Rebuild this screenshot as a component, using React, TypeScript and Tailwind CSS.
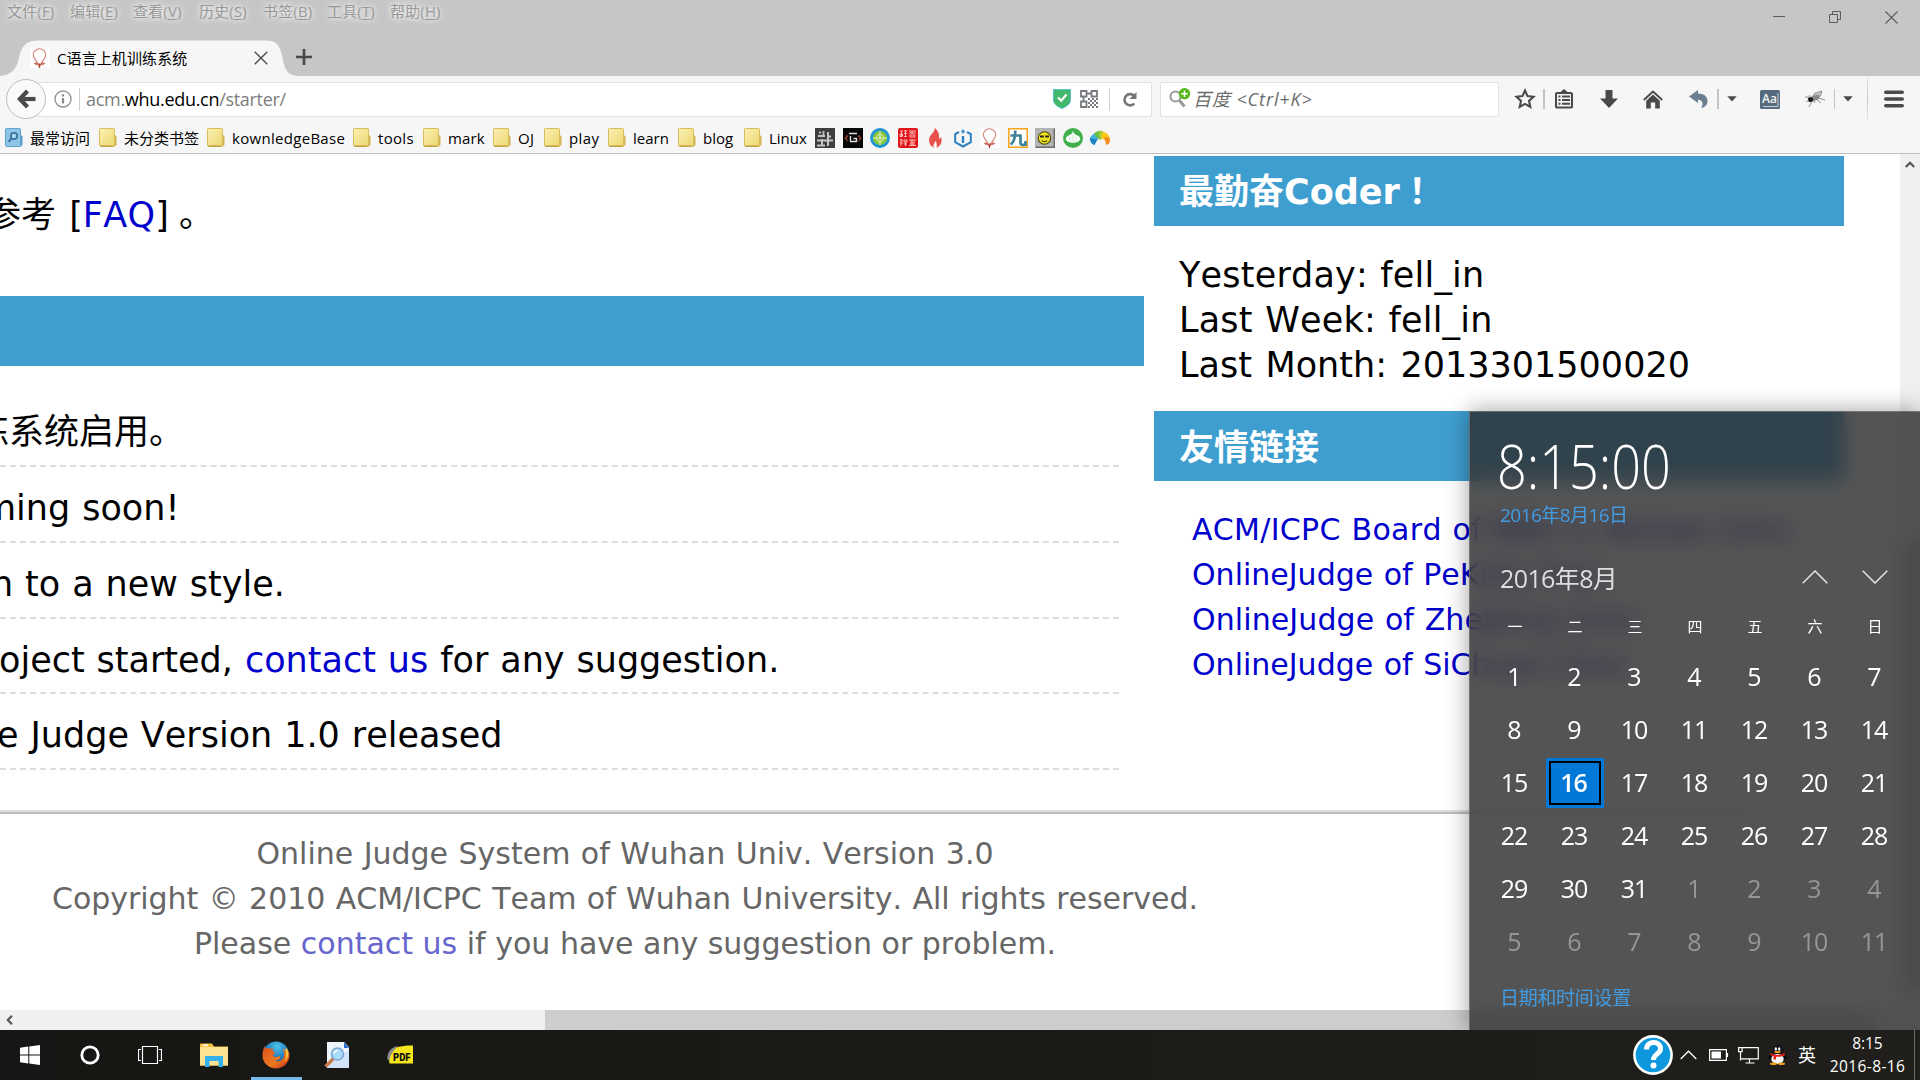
import React from "react";

const UI = "font-['Open_Sans','Noto_Sans_CJK_SC',sans-serif]";
const WEB = "font-['DejaVu_Sans','Noto_Sans_CJK_SC',sans-serif] [font-kerning:none]";

/* ---------- small drawings ---------- */

const Balloon = () => (
  <svg width="20" height="20" viewBox="0 0 20 20" className="shrink-0">
    <rect width="20" height="20" fill="#fff" />
    <path d="M7.500 15C6.500 12.500 3.300 10.500 3.300 6.800a6.200 6 0 0 1 12.400 0C15.700 10.500 12.500 12.500 11.500 15" fill="none" stroke="#d27f73" strokeWidth="1.100" />
    <path d="M3.500 15l3.500-.5 2.500 1.500 2.500-1.500 3.500.5-2.500 2.200-1-.7-2.500 2.500-2.500-2.500-1 .7z" fill="#c96a5e" />
    <path d="M9.500 15.500V20" stroke="#b24438" strokeWidth="1.200" />
  </svg>
);

const Folder = () => (
  <svg width="18" height="20" viewBox="0 0 18 20" className="shrink-0">
    <defs>
      <linearGradient id="fold" x1="0" y1="0" x2="1" y2="1">
        <stop offset="0" stopColor="#fbf0b4" />
        <stop offset="1" stopColor="#ecd872" />
      </linearGradient>
    </defs>
    <path d="M12 7h4l1.500 1.500V17L15 19H3z" fill="#d3b454" />
    <path d="M13 8h3v8l-3 2z" fill="#ecdb8c" />
    <rect x=".5" y=".5" width="15" height="17.500" rx=".8" fill="url(#fold)" stroke="#d9bd5c" />
    <path d="M1 17.500h13l-1 1.500H1.500z" fill="#c2a245" />
  </svg>
);

const MostVisited = () => (
  <svg width="18" height="20" viewBox="0 0 18 20" className="shrink-0">
    <path d="M12 7h4l1.500 1.500V17L15 19H3z" fill="#5a9dc8" />
    <rect x=".5" y=".5" width="15" height="18" rx=".8" fill="#8fc4e6" stroke="#5fa3d0" />
    <circle cx="9" cy="8" r="3.200" fill="#a9d5ef" stroke="#3a759f" strokeWidth="1.800" />
    <path d="M6.700 10.300L3.500 13.700" stroke="#3a759f" strokeWidth="2" />
  </svg>
);

const favicons: React.ReactNode[] = [
  <svg width="20" height="20" viewBox="0 0 20 20">
    <rect width="20" height="20" fill="#3e3e40" />
    <g stroke="#c4c4c4" fill="none">
      <path d="M8.500 3v5M3 8h7" strokeWidth="1.800" />
      <path d="M2 12.500h16M2 17.500h8" strokeWidth="2" />
      <path d="M7 11v6M13 4v14M13 8.500h3" strokeWidth="2" />
      <path d="M4 4.500h2" strokeWidth="2" />
    </g>
  </svg>,
  <svg width="20" height="20" viewBox="0 0 20 20">
    <rect width="20" height="20" fill="#080808" />
    <path d="M6 5.500h8M7.500 8v5.500h6V10.500h-3" fill="none" stroke="#dcdcdc" strokeWidth="1.400" />
    <path d="M4.500 7.500l-2 2.500 2 3M15.500 7.500l2 2.500-2 3" fill="none" stroke="#c9503a" strokeWidth="1.500" strokeDasharray="2 1" />
  </svg>,
  <svg width="20" height="20" viewBox="0 0 20 20">
    <circle cx="10" cy="10" r="8.500" fill="#8cc63a" stroke="#1f95d6" strokeWidth="2.800" />
    <circle cx="10" cy="10" r="3.500" fill="none" stroke="#d9efb0" strokeWidth="1" />
    <path d="M10 3v14M3 10h14" stroke="#e3f4c4" strokeWidth="1.100" />
  </svg>,
  <svg width="20" height="20" viewBox="0 0 20 20">
    <rect width="20" height="20" rx="2" fill="#e3161b" />
    <g stroke="#ffb9b5" strokeWidth="1" fill="none">
      <path d="M2 3h3M3.500 3v5M2 6h2.500v2.500H2zM6 3h3M7.500 2v6M6 5.500h3M6 8.500h3" />
      <path d="M11 3h7M14 3v3M11 5h7M12 7h5v2h-5z" />
      <path d="M2 12h3M3 11v7M2 15h3M6 12h3v2H6zM6 16h3M7.500 14v4" />
      <path d="M11 12h7M12 14h5M14 11v7M11 17.500h7M12 16h5" />
    </g>
  </svg>,
  <svg width="20" height="20" viewBox="0 0 20 20">
    <path d="M9.500 0c1 3.500-4 6-5.200 10.200C3.300 14.500 5.500 18 9 19.800c-1.500-3 .8-4.500 1.600-7 1 1.600 1.600 4.500 1 7 4-1.800 6-5.800 4.600-10.800-.8 1-1.200 1.800-2.200 2C14.500 6.500 13 2 9.500 0z" fill="#e8514a" />
  </svg>,
  <svg width="20" height="20" viewBox="0 0 20 20">
    <path d="M6 4L2.200 6v8.200L10 18.500l7.800-4.300V6L14 4" fill="none" stroke="#2c7fc0" strokeWidth="2" />
    <path d="M10 8v7" stroke="#2c7fc0" strokeWidth="2.400" />
    <path d="M10 1l2.200 2.500L10 6 7.800 3.500z" fill="#4a97d0" />
  </svg>,
  <Balloon />,
  <svg width="20" height="20" viewBox="0 0 20 20">
    <rect x=".75" y=".75" width="18.500" height="18.500" fill="#fff" stroke="#f8a51b" strokeWidth="1.500" />
    <path d="M2.500 7.500h10.500M7.200 2.500c.2 7-.8 11-4.500 14M12.500 6.500V15c0 2 1.500 2.200 5 1.700V13" fill="none" stroke="#3f8298" strokeWidth="2.700" />
  </svg>,
  <svg width="20" height="20" viewBox="0 0 20 20">
    <rect width="20" height="20" fill="#b4b4b4" />
    <path d="M0 20h20V0l-1.500 1.500v17H1.500z" fill="#6d6d6d" />
    <circle cx="9.500" cy="10" r="6.300" fill="#f1e31b" stroke="#4c4712" strokeWidth="1.100" />
    <path d="M5 8.500h9" stroke="#222" strokeWidth="1.800" strokeDasharray="3.800 1.400" />
    <path d="M6.800 12.500c1.500 1.500 4 1.500 5.400 0" fill="none" stroke="#222" strokeWidth="1" />
  </svg>,
  <svg width="20" height="20" viewBox="0 0 20 20">
    <circle cx="10" cy="10" r="10" fill="#41b04b" />
    <path d="M10 2.500c-.3 3-2 4-4.500 5-5 2.500-3 6.800 4.500 7.500 7.500-.7 9.500-5 4.500-7.500C12 6.500 10.300 5.500 10 2.500z" fill="#fff" />
    <path d="M10 6v8.500M7.500 8.500c-1.200 2-1.200 4 0 5.500M12.500 8.500c1.200 2 1.200 4 0 5.500" fill="none" stroke="#a9dcac" strokeWidth=".7" />
  </svg>,
  <svg width="20" height="20" viewBox="0 0 20 20">
    <path d="M0 10L5 7l3 3.500L4.500 17C2 16.500 0 14 0 10z" fill="#1c7fc4" />
    <path d="M0 10C1 8 3 6 5 5l4 4-3.500 2.500z" fill="#3fb3dc" />
    <path d="M4 5.500C7 2.500 11 2 13.500 4L10 12 6 8.500z" fill="#6fbf44" />
    <path d="M9 3c2-.6 3.500 0 5 1.500L12 10.500l-2 1.500z" fill="#a6ce39" />
    <path d="M12.500 4c3.500 0 6 2 7 5.500L15 12.500l-4-3z" fill="#fbc914" />
    <path d="M14 9l5.500.5c1 3 .2 5.500-1.500 7h-2.500c.3-2.500 0-4.500-1.500-7.500z" fill="#f58a1f" />
  </svg>,
];

/* ---------- browser chrome ---------- */

const menus = [
  { t: "文件", k: "F", w: "w-[63px]" },
  { t: "编辑", k: "E", w: "w-[63px]" },
  { t: "查看", k: "V", w: "w-[66px]" },
  { t: "历史", k: "S", w: "w-[64px]" },
  { t: "书签", k: "B", w: "w-[64px]" },
  { t: "工具", k: "T", w: "w-[63px]" },
  { t: "帮助", k: "H", w: "w-[64px]" },
];

const TitleBar = () => (
  <div className="flex h-[76px] justify-between bg-[#c6c6c6]">
    <div>
      <div className="flex h-[40px] pl-[7px] text-[15px] leading-[22px] tracking-[0.150px] text-[#979797] [text-shadow:0_0_5px_#fff,0_0_8px_#ececec]">
        {menus.map((m) => (
          <span key={m.k} className={`${m.w} whitespace-nowrap`}>
            {m.t}(<span className="underline underline-offset-2">{m.k}</span>)
          </span>
        ))}
      </div>
      <div className="flex h-[36px]">
        <div className="relative flex h-[36px] w-[296px] items-center">
          <svg width="298" height="36" viewBox="0 0 298 36" className="absolute left-0 top-0">
            <path d="M0 36C12 35 17 28 19 18C21.500 5 27 .5 38 .5H266C277 .5 280.500 6 282.500 18C284.500 30 288 35.500 298 36Z" fill="#f6f6f6" />
          </svg>
          <div className="relative flex w-full items-center pl-[30px]">
            <Balloon />
            <span className="-mt-px ml-[7px] w-[197px] whitespace-nowrap text-[15px] leading-5 tracking-[0.100px] text-black">C语言上机训练系统</span>
            <svg width="14" height="14" viewBox="0 0 14 14">
              <path d="M.7.700l12.600 12.600M13.300.700L.7 13.300" stroke="#4d4d4d" strokeWidth="1.400" />
            </svg>
          </div>
        </div>
        <svg width="16" height="16" viewBox="0 0 16 16" className="mt-[9px]">
          <path d="M8 0v16M0 8h16" stroke="#4a4a4a" strokeWidth="2.700" />
        </svg>
      </div>
    </div>
    <div className="flex gap-[43px] pr-[22px] pt-[11px] text-[#5c5c5c]">
      <svg width="13" height="13" viewBox="0 0 13 13"><path d="M0 5.500h12" stroke="currentColor" /></svg>
      <svg width="13" height="13" viewBox="0 0 13 13"><path d="M.5 3.500h8v8h-8zM3.500 3V.5h8v8H9" fill="none" stroke="currentColor" /></svg>
      <svg width="13" height="13" viewBox="0 0 13 13"><path d="M.5.500l12 12M12.500.500l-12 12" stroke="currentColor" strokeWidth="1.100" /></svg>
    </div>
  </div>
);

const Caret = () => (
  <svg width="10" height="6" viewBox="0 0 10 6"><path d="M.3.300h9.400L5 5.500z" fill="#4a4a4a" /></svg>
);

const NavBar = () => (
  <div className="flex h-[46px] items-center pl-[6px]">
    <div className="relative z-10 -mr-[8px] flex size-[40px] shrink-0 items-center justify-center rounded-full border border-[#bdbdbd] bg-[#fafafa]">
      <svg width="19" height="20" viewBox="0 0 19 20">
        <path d="M10.500 2L2.800 10l7.700 8" fill="none" stroke="#4a4a4a" strokeWidth="4.200" />
        <path d="M3 10h15.500" stroke="#4a4a4a" strokeWidth="4.200" />
      </svg>
    </div>
    <div className="flex h-[35px] w-[1114px] shrink-0 items-center rounded-r-[2px] border border-[#e1e1e1] bg-white pl-[15px]">
      <svg width="18" height="18" viewBox="0 0 18 18">
        <circle cx="9" cy="9" r="8" fill="none" stroke="#959595" strokeWidth="1.400" />
        <path d="M9 8v5.500M9 4.200v2.200" stroke="#8a8a8a" strokeWidth="2.200" />
      </svg>
      <div className="ml-[7px] h-[23px] w-px bg-[#cfcfcf]" />
      <div className="ml-[6px] w-[967px] whitespace-nowrap text-[18px] leading-6 tracking-[-0.300px] text-[#7d7d7d]">
        acm.<span className="text-black">whu.edu.cn</span>/starter/
      </div>
      <svg width="18" height="20" viewBox="0 0 18 20">
        <path d="M.5.500h17V11c0 4-4 6.500-8.500 8.500C4.500 17.500.5 15 .5 11z" fill="#43b76a" stroke="#53c3cf" />
        <path d="M5 8.500l3.200 3.200L13.500 5.500" fill="none" stroke="#fff" strokeWidth="2.200" />
      </svg>
      <svg width="18" height="18" viewBox="0 0 18 18" className="ml-[9px]">
        <g fill="none" stroke="#75787d" strokeWidth="1.800">
          <path d="M1 1h5.500v5.500H1zM11.500 1H17v5.500h-5.500zM1 11.500h5.500V17H1z" />
          <path d="M6.500 3.500h5M3.500 6.500v5" />
          <path d="M8 9h10M8 13h10M8 17h10" strokeDasharray="2 2" />
          <path d="M10 11h8M10 15h8" strokeDasharray="2 2" />
        </g>
      </svg>
      <div className="ml-[11px] h-[23px] w-px bg-[#cfcfcf]" />
      <svg width="15" height="15" viewBox="0 0 15 15" className="ml-[12px]">
        <path d="M12 3.700A5.600 5.600 0 1 0 12.300 11.500" fill="none" stroke="#757575" strokeWidth="2.600" />
        <path d="M14.500 0v7H7.500z" fill="#757575" />
      </svg>
    </div>
    <div className="ml-[8px] flex h-[35px] w-[339px] shrink-0 items-center rounded-[2px] border border-[#e1e1e1] bg-white pl-[8px]">
      <svg width="22" height="20" viewBox="0 0 22 20" className="-mt-[2px]">
        <circle cx="6.500" cy="8.500" r="5" fill="none" stroke="#999" strokeWidth="2" />
        <path d="M10.500 12.500l5 6" stroke="#999" strokeWidth="3" />
        <circle cx="15.500" cy="5.700" r="5.700" fill="#56b81c" />
        <path d="M15.500 2.500v6.400M12.300 5.700h6.400" stroke="#fff" strokeWidth="1.600" />
      </svg>
      <span className="ml-[2px] whitespace-nowrap text-[18px] italic leading-6 tracking-[0.900px] text-[#6b6b6b]">百度 &lt;Ctrl+K&gt;</span>
    </div>
    <div className="flex h-full flex-1 items-center text-[#4a4a4a]">
      <svg width="22" height="22" viewBox="0 0 22 22" className="ml-[15px]">
        <path d="M11 2.500l2.500 5.600 6 .7-4.500 4.100 1.300 6L11 15.900l-5.300 3 1.300-6-4.500-4.100 6-.7z" fill="none" stroke="currentColor" strokeWidth="2.100" />
      </svg>
      <div className="ml-[7px] h-[20px] w-[2px] bg-[#c4c4c4]" />
      <svg width="18" height="20" viewBox="0 0 18 20" className="ml-[10px]">
        <path d="M9 0l4 3.500H5z" fill="currentColor" />
        <rect x="1" y="4" width="16" height="14.500" rx="1.200" fill="none" stroke="currentColor" strokeWidth="2.100" />
        <path d="M3.500 7.500h2M3.500 11h2M3.500 14.800h2M7 7.500h8M7 11h8M7 14.800h8" stroke="currentColor" strokeWidth="1.900" />
      </svg>
      <svg width="18" height="18" viewBox="0 0 18 18" className="ml-[27px]">
        <path d="M5.500 0h7v8.500H18l-9 9.500-9-9.500h5.500z" fill="currentColor" />
      </svg>
      <svg width="20" height="19" viewBox="0 0 20 19" className="ml-[25px]">
        <path d="M.8 10L10 1.500 19.200 10" fill="none" stroke="currentColor" strokeWidth="1.900" />
        <path d="M10 4.500l6.800 6.300V18.500h-4.600V12.500H7.800v6H3.200v-7.700z" fill="currentColor" />
      </svg>
      <svg width="19" height="18" viewBox="0 0 19 18" className="ml-[26px]">
        <path d="M0 6.500L9 0v3.500c6 0 9.500 3 9.500 7.500 0 4-2.500 6.500-6.500 7 2-2 3-8-3-8.300V13z" fill="#6c7f90" />
      </svg>
      <div className="ml-[9px] h-[20px] w-[1.500px] bg-[#c4c4c4]" />
      <span className="ml-[8px]"><Caret /></span>
      <svg width="20" height="19" viewBox="0 0 20 19" className="ml-[23px]">
        <rect width="20" height="19" rx="1.500" fill="#566b7d" />
        <path d="M18 3v13.500H3" fill="none" stroke="#c9d2da" strokeWidth="1" />
        <text x="2" y="13" fontSize="12" fontWeight="600" fill="#f2f5f7" fontFamily="Open Sans, sans-serif">Aa</text>
      </svg>
      <svg width="21" height="18" viewBox="0 0 21 18" className="ml-[25px]">
        <path d="M6 8L10 3l7-2-1.500 5-5 3z" fill="#c2c2c2" stroke="#777" strokeWidth=".7" />
        <ellipse cx="10" cy="8" rx="5" ry="2.600" transform="rotate(-25 10 8)" fill="#8a8a8a" />
        <circle cx="5.500" cy="9.500" r="2.600" fill="#1a1a1a" />
        <path d="M0 7h4M1 12l3-2M4 17l3-6M10 13l-2-3M13 8l7 2M11 9l5 4M4 5l2 3" fill="none" stroke="#777" strokeWidth=".8" />
      </svg>
      <div className="ml-[8px] h-[20px] w-px bg-[#c4c4c4]" />
      <span className="ml-[8px]"><Caret /></span>
      <div className="ml-[14px] h-full w-px bg-gradient-to-b from-[#e6e6e6] via-[#c6c6c6] to-[#ececec]" />
      <svg width="20" height="18" viewBox="0 0 20 18" className="ml-[16px]">
        <path d="M1.800 2.200h16.400M1.800 9h16.400M1.800 15.800h16.400" stroke="currentColor" strokeWidth="3.600" strokeLinecap="round" />
      </svg>
    </div>
  </div>
);

const bookmarks = [
  { t: "最常访问", w: "w-[94px]", tr: "" },
  { t: "未分类书签", w: "w-[108px]", tr: "" },
  { t: "kownledgeBase", w: "w-[146px]", tr: "tracking-[0.300px]" },
  { t: "tools", w: "w-[70px]", tr: "tracking-[0.300px]" },
  { t: "mark", w: "w-[70px]", tr: "tracking-[0.100px]" },
  { t: "OJ", w: "w-[51px]", tr: "tracking-[0.400px]" },
  { t: "play", w: "w-[64px]", tr: "tracking-[0.400px]" },
  { t: "learn", w: "w-[70px]", tr: "" },
  { t: "blog", w: "w-[66px]", tr: "" },
  { t: "Linux", w: "w-[71px]", tr: "" },
];

const BookmarkBar = () => (
  <div className="flex h-[32px] items-center border-b border-[#bfbfbf] pl-[5px]">
    {bookmarks.map((b, i) => (
      <div key={b.t} className={`${b.w} flex shrink-0 items-center`}>
        {i === 0 ? <MostVisited /> : <Folder />}
        <span className={`${b.tr} ml-[7px] whitespace-nowrap text-[15px] leading-5 text-black`}>{b.t}</span>
      </div>
    ))}
    <div className="flex gap-[7.500px]">
      {favicons.map((f, i) => (
        <span key={i}>{f}</span>
      ))}
    </div>
  </div>
);

/* ---------- web page ---------- */

const link = "text-[#0000cc]";
const heading = "h-[70px] bg-[#3f9ed0] pl-[25px] text-[35px] font-bold text-white";

const Sidebar = () => (
  <div className="w-[690px] pt-[2px]">
    <h2 className={`${heading} leading-[72px]`}>
      最勤奋Coder<span className="font-['Noto_Sans_CJK_TC',sans-serif] leading-none">！</span>
    </h2>
    <div className="h-[185px] whitespace-nowrap pl-[25px] pt-[27px] text-[35px] leading-[45px] text-black">
      <p className="tracking-[0.200px] [word-spacing:1px]">Yesterday: fell_in</p>
      <p className="tracking-[0.200px] [word-spacing:1.200px]">Last Week: fell_in</p>
      <p className="[word-spacing:2.400px]">Last Month: 2013301500020</p>
    </div>
    <h2 className={`${heading} leading-[75px]`}>友情链接</h2>
    <div className={`whitespace-nowrap pl-[38px] pt-[26px] text-[30px] leading-[45px] [word-spacing:1px] ${link}`}>
      <p className="tracking-[0.300px]">ACM/ICPC Board of BBS in Wuhan Univ.</p>
      <p>OnlineJudge of PeKing Univ.</p>
      <p className="tracking-[0.100px]">OnlineJudge of ZheJiang Univ.</p>
      <p>OnlineJudge of SiChuan Univ.</p>
    </div>
  </div>
);

const row = "h-[75.750px] border-b-2 border-dashed border-[#dddddd] leading-[82px] whitespace-nowrap";

const Page = () => (
  <div className={`${WEB} flex h-[856px] bg-white`}>
    <div className="w-[1900px] overflow-hidden">
      <div className="flex h-[656px]">
        <div className="w-[1144px] text-[35px] text-black">
          <p className="-ml-[14px] h-[142px] whitespace-nowrap pt-[39px] leading-[45px] [word-spacing:2px]">
            参考 [<span className={`${link} tracking-[0.300px]`}>FAQ</span>]<span className="pl-[10px]">。</span>
          </p>
          <div className="h-[70px] bg-[#3f9ed0]" />
          <ul className="w-[1119px] pt-[25.250px] [word-spacing:0.800px]">
            <li className={row}><span className="-ml-[26px]">练系统启用。</span></li>
            <li className={row}><span className="-ml-[18px]">ming soon!</span></li>
            <li className={row}><span className="-ml-[9px]">n to a new style.</span></li>
            <li className={row}><span className="-ml-[1px]">oject started, <span className={link}>contact us</span> for any suggestion.</span></li>
            <li className={row}><span className="-ml-[3px]">e Judge Version 1.0 released</span></li>
          </ul>
        </div>
        <div className="ml-[10px]"><Sidebar /></div>
      </div>
      <div className="h-[4px] w-[1750px] border-b-2 border-t-2 border-b-[#bbbbbb] border-t-[#dddddd]" />
      <div className="w-[1250px] pt-[17px] text-center text-[30px] leading-[45px] text-[#666666]">
        <p className="[word-spacing:0.900px]">Online Judge System of Wuhan Univ. Version 3.0</p>
        <p className="tracking-[-0.030px] [word-spacing:0.900px]">Copyright © 2010 ACM/ICPC Team of Wuhan University. All rights reserved.</p>
        <p>Please <span className="text-[#6666cc]">contact us</span> if you have any suggestion or problem.</p>
      </div>
    </div>
    <div className="w-[20px] bg-[#f0f0f0] pt-[7px]">
      <svg width="10" height="7" viewBox="0 0 10 7" className="ml-[5px]">
        <path d="M.8 6L5 1.800 9.200 6" fill="none" stroke="#555" strokeWidth="2.200" />
      </svg>
      <div className="mt-[372px] h-[450px] bg-[#cdcdcd]" />
    </div>
  </div>
);

/* ---------- clock flyout ---------- */

const week = ["一", "二", "三", "四", "五", "六", "日"];
const days = [
  ...Array.from({ length: 31 }, (_, i) => ({ d: i + 1, off: false })),
  ...Array.from({ length: 11 }, (_, i) => ({ d: i + 1, off: true })),
];

const ClockFlyout = () => (
  <div className="absolute bottom-[50px] right-0 h-[619px] w-[451px] overflow-hidden border-l border-t border-[#8a8a8a]/60 bg-[#2c2c2c]/[0.81] shadow-[0_0_22px_rgba(0,0,0,0.38)] backdrop-blur-[10px]">
    <div className="ml-[27px] mt-[14px] h-[79px] w-max origin-left scale-x-[0.870] whitespace-nowrap text-[60px] font-light leading-[80px] text-white">8:15:00</div>
    <div className="ml-[30px] mt-[-2px] h-[24px] whitespace-nowrap text-[19px] leading-[24px] tracking-[-0.550px] text-[#429ce3]">2016年8月16日</div>
    <div className="mt-[34px] flex h-[34px] items-center pl-[30px]">
      <span className="w-[302px] whitespace-nowrap text-[25px] leading-[34px] tracking-[-0.600px] text-[#dedede]">2016年8月</span>
      <svg width="26" height="14" viewBox="0 0 26 14" className="-mt-[2px]"><path d="M.7 13.300L13 1l12.300 12.300" fill="none" stroke="#e4e4e4" strokeWidth="1.500" /></svg>
      <svg width="26" height="14" viewBox="0 0 26 14" className="-mt-[2px] ml-[34px]"><path d="M.7.700L13 13 25.300.700" fill="none" stroke="#e4e4e4" strokeWidth="1.500" /></svg>
    </div>
    <div className="ml-[15px] mt-[18px] grid w-[420px] grid-cols-7 text-center text-[15px] leading-[26px] text-white">
      {week.map((w) => (
        <span key={w}>{w}</span>
      ))}
    </div>
    <div className="ml-[14px] mt-[11px] grid w-[420px] auto-rows-[53px] grid-cols-7 items-center text-center text-[25px] leading-none tracking-[-1px]">
      {days.map(({ d, off }, i) =>
        d === 16 ? (
          <span key={i} className="ml-[2px] flex h-[50px] w-[58px] border-[3px] border-[#0078d7] bg-[#0078d7]">
            <span className="flex flex-1 items-center justify-center border-2 border-black pr-[3px] font-semibold text-white">16</span>
          </span>
        ) : (
          <span key={i} className={off ? "text-[#969696]" : "text-white"}>{d}</span>
        )
      )}
    </div>
    <div className="ml-[30px] mt-[17px] text-[19px] leading-[26px] tracking-[-0.300px] text-[#429ce3]">日期和时间设置</div>
  </div>
);

/* ---------- taskbar ---------- */

const Taskbar = () => (
  <div className="relative z-20 flex h-[50px] items-center justify-between bg-gradient-to-r from-[#161614] via-[#1b1a17] to-[#201f1c]">
    <div className="flex h-full items-center pl-[20px]">
      <svg width="20" height="20" viewBox="0 0 20 20">
        <path d="M0 2.800L8.300 1.600V9.500H0zM9.300 1.400L20 0V9.500H9.300zM0 10.500H8.300v7.900L0 17.200zM9.300 10.500H20V20L9.300 18.600z" fill="#fff" />
      </svg>
      <svg width="20" height="20" viewBox="0 0 20 20" className="ml-[40px]">
        <circle cx="10" cy="10" r="8.200" fill="none" stroke="#fff" strokeWidth="2.800" />
      </svg>
      <svg width="24" height="18" viewBox="0 0 24 18" className="ml-[38px]">
        <path d="M4.500.500h15v17h-15zM3 3.500H.5v11H3M21 3.500h2.500v11H21" fill="none" stroke="#fff" strokeWidth="1.200" />
      </svg>
      <svg width="28" height="24" viewBox="0 0 28 24" className="ml-[38px]">
        <path d="M0 2.500V1.500Q0 .5 1 .5h11l2 3h14v19H0z" fill="#f3c13f" />
        <path d="M0 4h28v18.500H0z" fill="#fde293" />
        <rect x="3" y="1.500" width="5" height="1.500" fill="#fff" />
        <path d="M5 24V13h18v11h-4.500v-6h-9v6z" fill="#33b1ea" />
      </svg>
      <div className="ml-[23px] flex h-full w-[51px] justify-center border-b-[3px] border-[#76b9ed] pr-[2px]">
        <svg width="28" height="28" viewBox="0 0 28 28" className="mt-[11px]">
          <defs>
            <radialGradient id="globe" cx=".55" cy=".2" r=".9">
              <stop offset="0" stopColor="#4cc4ec" />
              <stop offset=".55" stopColor="#1c6fb4" />
              <stop offset="1" stopColor="#12346b" />
            </radialGradient>
            <linearGradient id="fox" x1=".1" y1=".1" x2=".9" y2="1">
              <stop offset="0" stopColor="#e0561c" />
              <stop offset=".6" stopColor="#ec7a1f" />
              <stop offset="1" stopColor="#c5301a" />
            </linearGradient>
          </defs>
          <circle cx="14" cy="13.500" r="13" fill="url(#globe)" />
          <path d="M3 4.500c-.3 1.500 0 2.500.5 3C5 6.500 7.500 7 8.500 8c1.500-.8 3-.5 3-.5-.8 1-1 2-.5 3l2.500.8c.3 1.200-2.500 1.500-2.500 3.200 1 1.800 3.500 2 5 1 1.200-.8 2.500-.2 2.500.8-1 2.700-4 3.700-6.500 3 4 2.700 9.500.2 10.200-5 .3-3-.7-5-2.200-7 3 1.500 4.300 3.500 4.700 5.500.3-2-.2-4.500-1.500-6.500C26 9 27.800 12 27.500 15c-.7 7-6.500 12.500-13.500 12.500S.5 22 .5 14.500C.5 10.500 1.500 7 3 4.500z" fill="url(#fox)" />
          <path d="M25 7.500c2 4.500 1.500 10-2.500 13.500 2-4 2.300-9 .5-13z" fill="#fbc43b" />
        </svg>
      </div>
      <svg width="26" height="28" viewBox="0 0 26 28" className="ml-[22px]">
        <path d="M3 1h17l5 5.500V27H3z" fill="#d3e4fa" />
        <path d="M3 1h17l5 5.500V9L3 22z" fill="#edf4fe" />
        <path d="M20 1v6h5z" fill="#2c6fd0" />
        <path d="M9.500 17.500L1.500 25.500" stroke="#c97b4b" strokeWidth="3.400" />
        <circle cx="13.500" cy="13" r="6" fill="#a6dcf8" stroke="#7fa6d8" strokeWidth="1.600" />
        <path d="M10 12.500c.5-2.200 2-3.200 4-3" fill="none" stroke="#fff" strokeWidth="1.600" />
      </svg>
      <svg width="27" height="20" viewBox="0 0 27 20" className="ml-[37px]">
        <path d="M2.500 18.500C.5 10 5 3 12 1.800L20 .5h6v18z" fill="#f6e51a" />
        <path d="M.5 15C-.5 8 4 2 11 1 7 5 4 8 2.500 15z" fill="#8b8b87" />
        <text x="6" y="16" fontSize="11.500" fontWeight="900" fill="#111" textLength="17.500" lengthAdjust="spacingAndGlyphs" fontFamily="Roboto, sans-serif">PDF</text>
      </svg>
    </div>
    <div className="flex h-full items-center text-white">
      <svg width="40" height="40" viewBox="0 0 40 40">
        <circle cx="20" cy="20" r="18.600" fill="#0d97dc" stroke="#fff" strokeWidth="2.600" />
        <path d="M13.500 14.500c0-9.500 14.500-9 14 -.5-.3 5-7 5-7 11" fill="none" stroke="#fff" strokeWidth="5" />
        <circle cx="20.500" cy="30.500" r="3" fill="#fff" />
      </svg>
      <svg width="17" height="10" viewBox="0 0 17 10" className="ml-[7px]"><path d="M.7 9L8.500 1.200 16.300 9" fill="none" stroke="#fff" strokeWidth="1.300" /></svg>
      <svg width="20" height="12" viewBox="0 0 20 12" className="ml-[12px]">
        <path d="M.6.600h16.800v10.800H.6zM18.500 4v4" fill="none" stroke="#fff" strokeWidth="1.200" />
        <rect x="2.500" y="2.500" width="9.500" height="7" fill="#fff" />
      </svg>
      <svg width="21" height="17" viewBox="0 0 21 17" className="ml-[9px]">
        <path d="M4.500.600h15.800v11.200H3M11.500 12v3.500M7.500 16h9M.6.600h3.500v4H.6zM2.500 5v8.500" fill="none" stroke="#fff" strokeWidth="1.200" />
      </svg>
      <svg width="19" height="20" viewBox="0 0 19 20" className="ml-[9px]">
        <ellipse cx="9.500" cy="12.500" rx="9" ry="4" fill="#0c0c10" />
        <ellipse cx="9.500" cy="6" rx="5.500" ry="6" fill="#14141c" />
        <ellipse cx="9.500" cy="14" rx="6.200" ry="5" fill="#f6f6f6" />
        <ellipse cx="7.800" cy="4" rx="1.200" ry="1.700" fill="#fff" />
        <ellipse cx="11.200" cy="4" rx="1.200" ry="1.700" fill="#fff" />
        <ellipse cx="9.500" cy="7" rx="3.300" ry="1" fill="#f2a71b" />
        <path d="M2.500 8c4 2.500 10 2.500 14 0l.5 2.200c-3.500 1.500-6.500 1.800-9 1.500v2.800H5.500v-3.200l-3-1.200z" fill="#e3201b" />
        <ellipse cx="5.500" cy="18.700" rx="3.600" ry="1.300" fill="#f0a11a" />
        <ellipse cx="13.500" cy="18.700" rx="3.600" ry="1.300" fill="#f0a11a" />
      </svg>
      <span className="ml-[11px] text-[18px] leading-none">英</span>
      <div className="ml-[11px] w-[81px] whitespace-nowrap text-center text-[15.500px] leading-[23px]">
        <p className="tracking-[-0.100px]">8:15</p>
        <p className="tracking-[0.400px]">2016-8-16</p>
      </div>
      <div className="mx-[5px] ml-[6px] h-full w-px bg-[#6a6a66]" />
    </div>
  </div>
);

export default function App() {
  return (
    <div className={`${UI} relative flex h-[1080px] w-[1920px] flex-col overflow-hidden bg-white`}>
      <TitleBar />
      <div className="bg-[#f6f6f6]">
        <NavBar />
        <BookmarkBar />
      </div>
      <Page />
      <div className="flex h-[20px] bg-[#f0f0f0]">
        <svg width="7" height="10" viewBox="0 0 7 10" className="ml-[6px] mt-[5px]">
          <path d="M6 .800L1.800 5 6 9.200" fill="none" stroke="#555" strokeWidth="2.200" />
        </svg>
        <div className="ml-[532px] w-[1330px] bg-[#cdcdcd]" />
      </div>
      <ClockFlyout />
      <Taskbar />
    </div>
  );
}
